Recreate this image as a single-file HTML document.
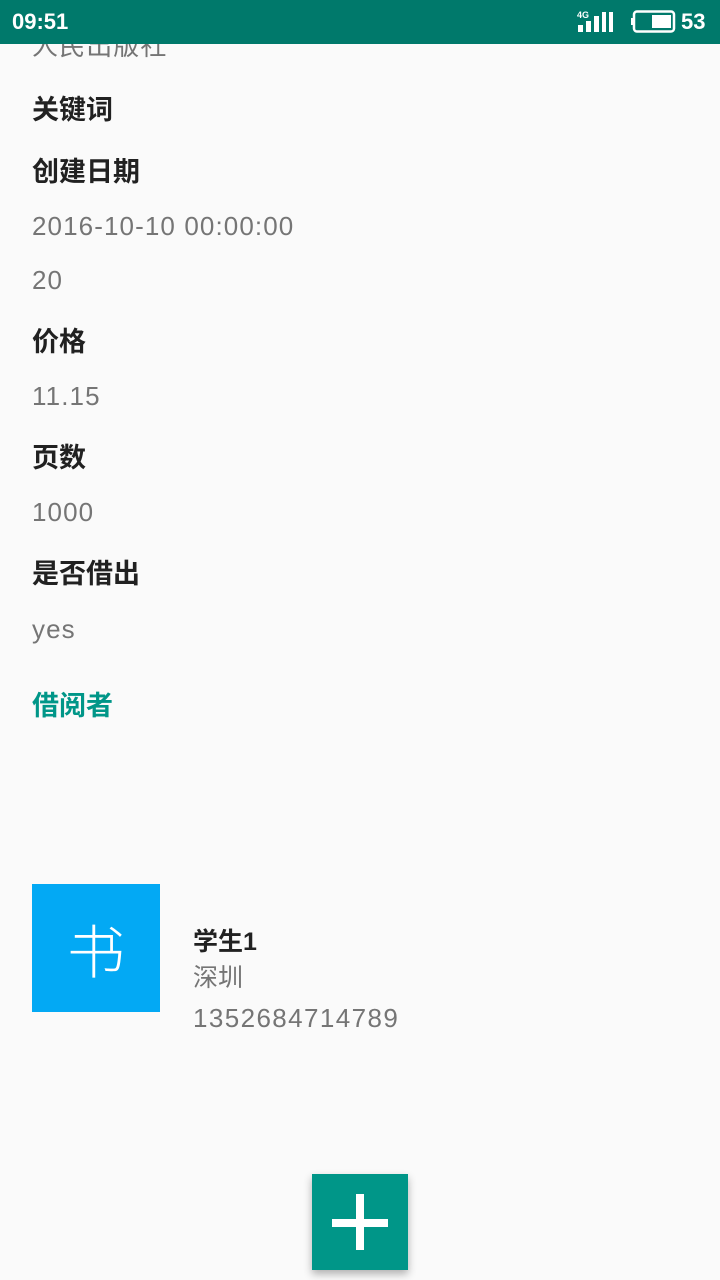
<!DOCTYPE html>
<html><head><meta charset="utf-8"><style>
body{margin:0;width:720px;height:1280px;background:#fafafa;position:relative;overflow:hidden;font-family:"Liberation Sans","Noto Sans CJK SC",sans-serif}
.t{position:absolute;left:32px;height:36px;line-height:36px;font-size:26px;white-space:nowrap}
.l{color:#212121;font-weight:bold;font-size:27px}
.v{color:#757575;font-size:26px;letter-spacing:1.1px}
</style></head><body>
<div class="t v" style="top:28px">人民出版社</div>
<div style="position:absolute;left:0;top:0;width:720px;height:44px;background:#00796b;color:#fff">
<div style="position:absolute;left:12px;top:6px;font-size:22px;font-weight:bold;line-height:32px">09:51</div>
<svg style="position:absolute;left:576px;top:10px" width="40" height="24"><text x="1" y="8" font-size="9" font-weight="bold" fill="#fff" font-family="Liberation Sans">4G</text><rect x="2" y="15" width="5" height="7" fill="#fff"/><rect x="10" y="11" width="5" height="11" fill="#fff"/><rect x="18" y="6" width="5" height="16" fill="#fff"/><rect x="26" y="2" width="4" height="20" fill="#fff"/><rect x="33" y="2" width="4" height="20" fill="#fff"/></svg>
<svg style="position:absolute;left:630px;top:10px" width="46" height="24"><rect x="4" y="1.5" width="40" height="20" rx="3" fill="none" stroke="#fff" stroke-width="2.5"/><rect x="1" y="8" width="3" height="7" fill="#fff"/><rect x="22" y="5" width="19" height="13" fill="#fff"/></svg>
<div style="position:absolute;left:681px;top:6px;font-size:22px;font-weight:bold;line-height:32px">53</div>
</div>
<div class="t l" style="top:92px">关键词</div>
<div class="t l" style="top:154px">创建日期</div>
<div class="t v" style="top:208px">2016-10-10 00:00:00</div>
<div class="t v" style="top:262px">20</div>
<div class="t l" style="top:324px">价格</div>
<div class="t v" style="top:378px">11.15</div>
<div class="t l" style="top:440px">页数</div>
<div class="t v" style="top:494px">1000</div>
<div class="t l" style="top:556px">是否借出</div>
<div class="t v" style="top:611px">yes</div>
<div class="t" style="top:688px;color:#009688;font-weight:bold;font-size:27px">借阅者</div>
<div style="position:absolute;left:32px;top:884px;width:128px;height:128px;background:#03a9f4;color:#fff;font-size:58px;line-height:128px;text-align:center;font-family:'Noto Sans CJK SC',sans-serif;font-weight:300">书</div>
<div class="t l" style="left:193px;top:924px;font-size:25px">学生1</div>
<div class="t v" style="left:193px;top:960px;font-size:25px;letter-spacing:0">深圳</div>
<div class="t v" style="left:193px;top:1000px;font-size:26px;letter-spacing:1.4px">1352684714789</div>
<div style="position:absolute;left:312px;top:1174px;width:96px;height:96px;background:#009688;box-shadow:0 4px 8px rgba(0,0,0,.3)">
<div style="position:absolute;left:20px;top:45px;width:56px;height:8px;background:#fff"></div>
<div style="position:absolute;left:44px;top:20px;width:8px;height:56px;background:#fff"></div>
</div>
</body></html>
